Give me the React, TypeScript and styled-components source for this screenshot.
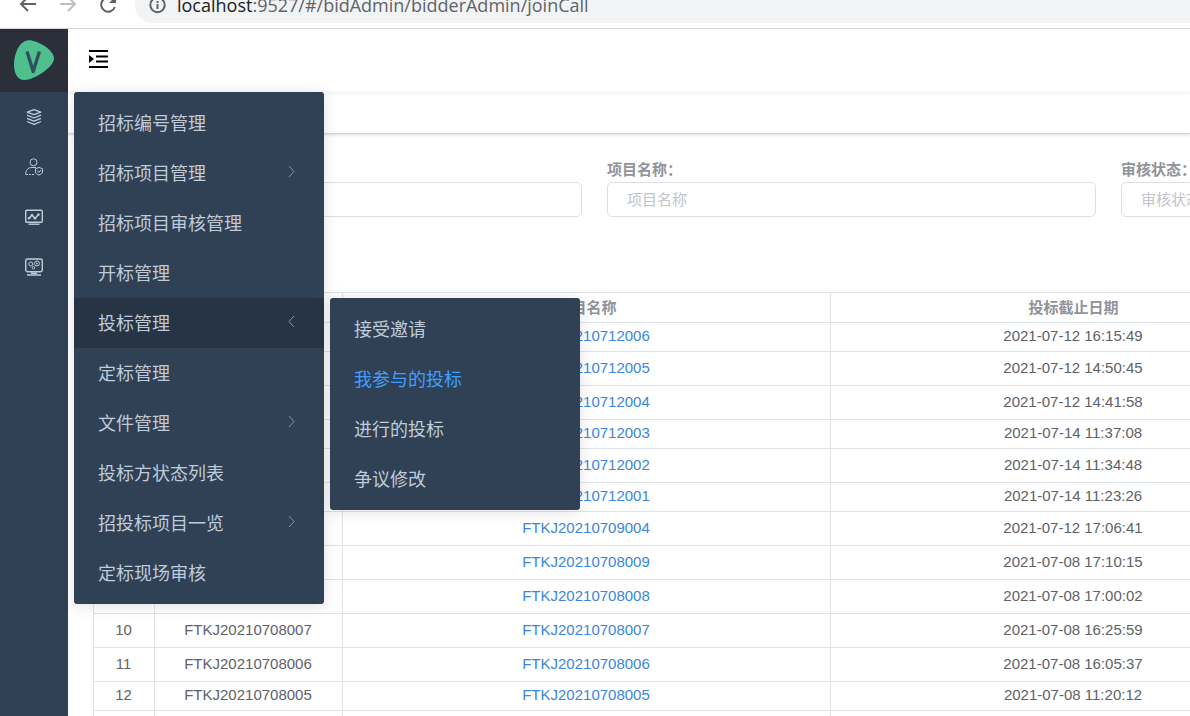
import React from "react";
import styled, { createGlobalStyle, css } from "styled-components";

const GlobalStyle = createGlobalStyle`
  *, *::before, *::after { box-sizing: border-box; }
  body {
    margin: 0;
    background: #fff;
    color: #606266;
    font-family: "Liberation Sans", "Noto Sans CJK SC", sans-serif;
    font-size: 15px;
  }
`;

const Page = styled.div`
  display: flex;
  flex-direction: column;
  height: 100vh;
  overflow: hidden;
`;

/* Browser chrome */
const BrowserBar = styled.div`
  flex: none;
  display: flex;
  align-items: flex-end;
  height: 29px;
  padding-bottom: 5px;
  border-bottom: 1px solid #d5d7da;
  overflow: hidden;
`;

const BrowserTools = styled.div`
  flex: 1;
  display: flex;
  align-items: center;
  height: 36px;
`;

const BrowserButton = styled.button`
  flex: none;
  display: flex;
  justify-content: center;
  width: 40px;
  padding: 0;
  border: 0;
  background: none;
`;

const NavButtons = styled.div`
  flex: none;
  display: flex;
  width: 135px;
  padding-left: 8px;
`;

const AddressBar = styled.div`
  flex: 1;
  display: flex;
  align-items: center;
  gap: 10px;
  height: 36px;
  padding-left: 13px;
  border-radius: 18px 0 0 18px;
  background: #f1f3f4;
  color: #5f6368;
  font-family: "Open Sans", sans-serif;
  font-size: 18px;
  line-height: 24px;
  white-space: nowrap;
`;

const Host = styled.span`
  color: #202124;
`;

/* Application shell */
const Shell = styled.div`
  flex: 1;
  display: flex;
  min-height: 0;
`;

const Sidebar = styled.aside`
  position: relative;
  z-index: 2;
  flex: none;
  width: 68px;
  background: #304156;
`;

const LogoLink = styled.a`
  display: flex;
  align-items: center;
  justify-content: center;
  height: 63px;
  padding-bottom: 2px;
  background: #2b2f3a;
`;

const MenuList = styled.ul`
  margin: 0;
  padding: 0;
  list-style: none;
`;

const SidebarItem = styled.li`
  position: relative;
`;

const SidebarButton = styled.button`
  display: flex;
  align-items: center;
  justify-content: center;
  width: 100%;
  height: 50px;
  padding: 0;
  border: 0;
  background: none;
  color: #bfcbd9;
`;

const Flyout = styled.ul`
  position: absolute;
  top: 0;
  left: calc(100% + 6px);
  z-index: 1;
  width: 250px;
  margin: 0;
  padding: 6px 0;
  border-radius: 3px;
  background: #304156;
  box-shadow: 0 2px 15px rgba(0, 0, 0, 0.12);
  list-style: none;
`;

const FlyoutItem = styled.li`
  position: relative;
`;

const FlyoutLink = styled.a<{ $open?: boolean; $active?: boolean }>`
  display: flex;
  align-items: center;
  justify-content: space-between;
  height: 50px;
  padding: 0 28px 2px 24px;
  background: ${(p) => (p.$open ? "#263445" : "transparent")};
  color: ${(p) => (p.$active ? "#409eff" : "#bfcbd9")};
  font-size: 18px;
  text-decoration: none;
  white-space: nowrap;
`;

const Main = styled.main`
  flex: 1;
  min-width: 0;
  overflow: hidden;
`;

const Navbar = styled.header`
  position: relative;
  display: flex;
  align-items: center;
  height: 63px;
  padding: 0 20px 4px;
  box-shadow: 0 1px 4px rgba(0, 21, 41, 0.08);
`;

const FoldButton = styled.button`
  display: flex;
  padding: 0;
  border: 0;
  background: none;
`;

const TagsBar = styled.div`
  height: 42px;
  border-bottom: 1px solid #d2d7de;
  box-shadow: 0 1px 3px rgba(0, 0, 0, 0.14);
`;

const Content = styled.div`
  display: flex;
  flex-direction: column;
  gap: 75px;
  padding: 23px 25px;
`;

const SearchForm = styled.form`
  display: grid;
  grid-template-columns: repeat(3, minmax(489px, 1fr));
  gap: 25px;
`;

const Field = styled.div`
  display: flex;
  flex-direction: column;
`;

const FieldLabel = styled.label`
  height: 25px;
  color: #909399;
  font-weight: 700;
  line-height: 25px;
`;

const control = css`
  width: 100%;
  height: 35px;
  padding: 0 19px;
  border: 1px solid #dcdfe6;
  border-radius: 5px;
  background: #fff;
  font-family: inherit;
  font-size: 15px;
`;

const TextInput = styled.input`
  ${control}
  color: #606266;
  &::placeholder { color: #c0c4cc; }
`;

const SelectInput = styled.select`
  ${control}
  appearance: none;
  color: #c0c4cc;
`;

const DataTable = styled.table`
  width: 100%;
  min-width: 1466px;
  border-top: 1px solid #dfe4e9;
  border-left: 1px solid #dfe4e9;
  border-spacing: 0;
  table-layout: fixed;
`;

const HeadCell = styled.th<{ $width?: number }>`
  width: ${(p) => (p.$width ? `${p.$width}px` : "auto")};
  height: 30px;
  padding: 0;
  border-right: 1px solid #dfe4e9;
  border-bottom: 1px solid #dfe4e9;
  color: #909399;
  line-height: 20px;
`;

const Cell = styled.td`
  padding: 0 1px 2px 0;
  border-right: 1px solid #dfe4e9;
  border-bottom: 1px solid #dfe4e9;
  line-height: 20px;
  text-align: center;
`;

const Row = styled.tr<{ $compact?: boolean }>`
  height: ${(p) => (p.$compact ? 29 : 34)}px;
`;

const ProjectLink = styled.a`
  color: #3a86dd;
  text-decoration: none;
`;

const BackIcon = () => (
  <svg width="18" height="16" viewBox="0 0 18 16" fill="none" stroke="#5f6368" strokeWidth="2">
    <path d="M17 8H2M9 1L2 8l7 7" />
  </svg>
);

const ForwardIcon = () => (
  <svg width="18" height="16" viewBox="0 0 18 16" fill="none" stroke="#bdc0c3" strokeWidth="2">
    <path d="M1 8h15M9 1l7 7-7 7" />
  </svg>
);

const ReloadIcon = () => (
  <svg width="18" height="18" viewBox="0 0 18 18" fill="none" stroke="#5f6368" strokeWidth="2">
    <path d="M14.500 4.200A7 7 0 1 0 15.800 11" />
    <path d="M17 0v7h-7z" fill="#5f6368" stroke="none" />
  </svg>
);

const InfoIcon = () => (
  <svg width="19" height="18" viewBox="0 0 19 18" fill="none" stroke="#5f6368" strokeWidth="2">
    <circle cx="9.500" cy="9" r="7.200" />
    <path d="M9.500 8v5M9.500 5v2" />
  </svg>
);

const Logo = () => (
  <svg width="40" height="40" viewBox="0 0 40 40">
    <path
      d="M14 0.300C21-.8 40 9 40 18.500 40 27 20 40 10.500 40 2.500 40 0 32 0 24.500 0 15 4.500 1.800 14 .3z"
      fill="#4fc08d"
    />
    <path d="M13 11.500l6.200 20 6.200-20" fill="none" stroke="#2f5061" strokeWidth="3.400" strokeLinejoin="round" />
  </svg>
);

const FoldIcon = () => (
  <svg width="21" height="18" viewBox="0 0 21 18">
    <path d="M1 1h19M8 6.500h12M8 11.500h12M1 17h19" stroke="#000" strokeWidth="2" />
    <path d="M1 5l5 4-5 4z" />
  </svg>
);

const LayersIcon = () => (
  <svg
    width="16"
    height="16"
    viewBox="0 0 16 16"
    fill="none"
    stroke="currentColor"
    strokeWidth="1.300"
    strokeLinejoin="round"
  >
    <path d="M8 .7l6.800 2.500L8 5.700 1.200 3.200z" />
    <path d="M1 6.200l7 2.800 7-2.800M1 9.400l7 2.800 7-2.800M1 12.500l7 2.800 7-2.800" />
  </svg>
);

const UserCheckIcon = () => (
  <svg width="18" height="18" viewBox="0 0 18 18" fill="none" stroke="currentColor">
    <circle cx="8.500" cy="4.300" r="3.500" />
    <path d="M11 9.500H7C3 9.500 .7 12 .7 16.500" />
    <path d="M1 16.500h9" strokeDasharray="2 1" />
    <path d="M14 9.500l3.500 1.200V14c0 1.500-2 2.700-3.500 3-1.500-.3-3.500-1.500-3.500-3v-3.300zM12.300 12.500l1.600 2 2-2.500" />
  </svg>
);

const ChartScreenIcon = () => (
  <svg width="18" height="16" viewBox="0 0 18 16" fill="none" stroke="currentColor">
    <rect x=".7" y="1.200" width="16.600" height="12" rx="1" strokeWidth="1.400" />
    <path d="M4 9.500L7 6l3 3.500 3.500-4" strokeWidth="1.600" />
    <g fill="currentColor" stroke="none">
      <circle cx="4" cy="9.300" r="1.200" />
      <circle cx="7" cy="6" r="1.200" />
      <circle cx="10" cy="9.300" r="1.200" />
      <circle cx="13.500" cy="5.500" r="1.200" />
    </g>
    <path d="M3.500 15.200h11" strokeWidth="1.400" />
  </svg>
);

const GearScreenIcon = () => (
  <svg width="18" height="18" viewBox="0 0 18 18" fill="none" stroke="currentColor">
    <rect x=".7" y="1" width="16.600" height="12.800" rx="2" strokeWidth="1.400" />
    <circle cx="5.800" cy="6" r="2" />
    <circle cx="12" cy="5.500" r="2.500" />
    <circle cx="12" cy="5.500" r=".6" />
    <circle cx="8.500" cy="9.700" r="1.300" />
    <path d="M2 17h14M6 15.300h6" strokeWidth="1.400" />
  </svg>
);

const Chevron = ({ left }: { left?: boolean }) => (
  <svg width="9" height="14" viewBox="0 0 9 14" fill="none" stroke="#909399">
    <path d={left ? "M7 1L2 6.500 7 12" : "M2 1l5 5.500L2 12"} />
  </svg>
);

type MenuEntry = { label: string; nested?: boolean; active?: boolean; children?: MenuEntry[] };

const menu: MenuEntry[] = [
  { label: "招标编号管理" },
  { label: "招标项目管理", nested: true },
  { label: "招标项目审核管理" },
  { label: "开标管理" },
  {
    label: "投标管理",
    nested: true,
    children: [
      { label: "接受邀请" },
      { label: "我参与的投标", active: true },
      { label: "进行的投标" },
      { label: "争议修改" },
    ],
  },
  { label: "定标管理" },
  { label: "文件管理", nested: true },
  { label: "投标方状态列表" },
  { label: "招投标项目一览", nested: true },
  { label: "定标现场审核" },
];

const bids = [
  { code: "FTKJ20210712006", deadline: "2021-07-12 16:15:49", compact: true },
  { code: "FTKJ20210712005", deadline: "2021-07-12 14:50:45" },
  { code: "FTKJ20210712004", deadline: "2021-07-12 14:41:58" },
  { code: "FTKJ20210712003", deadline: "2021-07-14 11:37:08", compact: true },
  { code: "FTKJ20210712002", deadline: "2021-07-14 11:34:48" },
  { code: "FTKJ20210712001", deadline: "2021-07-14 11:23:26", compact: true },
  { code: "FTKJ20210709004", deadline: "2021-07-12 17:06:41" },
  { code: "FTKJ20210708009", deadline: "2021-07-08 17:10:15" },
  { code: "FTKJ20210708008", deadline: "2021-07-08 17:00:02" },
  { code: "FTKJ20210708007", deadline: "2021-07-08 16:25:59" },
  { code: "FTKJ20210708006", deadline: "2021-07-08 16:05:37" },
  { code: "FTKJ20210708005", deadline: "2021-07-08 11:20:12", compact: true },
  { code: "FTKJ20210708004", deadline: "2021-07-08 11:02:40" },
];

const FlyoutMenu = ({ entries }: { entries: MenuEntry[] }) => (
  <Flyout>
    {entries.map((entry) => (
      <FlyoutItem key={entry.label}>
        <FlyoutLink href="#" $open={!!entry.children} $active={entry.active}>
          {entry.label}
          {entry.nested && <Chevron left={!!entry.children} />}
        </FlyoutLink>
        {entry.children && <FlyoutMenu entries={entry.children} />}
      </FlyoutItem>
    ))}
  </Flyout>
);

export default function App() {
  return (
    <Page>
      <GlobalStyle />
      <BrowserBar>
        <BrowserTools>
          <NavButtons>
            <BrowserButton aria-label="后退"><BackIcon /></BrowserButton>
            <BrowserButton aria-label="前进"><ForwardIcon /></BrowserButton>
            <BrowserButton aria-label="刷新"><ReloadIcon /></BrowserButton>
          </NavButtons>
          <AddressBar>
            <InfoIcon />
            <span><Host>localhost</Host>:9527/#/bidAdmin/bidderAdmin/joinCall</span>
          </AddressBar>
        </BrowserTools>
      </BrowserBar>
      <Shell>
        <Sidebar>
          <LogoLink href="#" aria-label="首页"><Logo /></LogoLink>
          <MenuList>
            <SidebarItem>
              <SidebarButton aria-label="招投标"><LayersIcon /></SidebarButton>
              <FlyoutMenu entries={menu} />
            </SidebarItem>
            <SidebarItem>
              <SidebarButton aria-label="用户"><UserCheckIcon /></SidebarButton>
            </SidebarItem>
            <SidebarItem>
              <SidebarButton aria-label="统计"><ChartScreenIcon /></SidebarButton>
            </SidebarItem>
            <SidebarItem>
              <SidebarButton aria-label="系统"><GearScreenIcon /></SidebarButton>
            </SidebarItem>
          </MenuList>
        </Sidebar>
        <Main>
          <Navbar>
            <FoldButton aria-label="展开菜单"><FoldIcon /></FoldButton>
          </Navbar>
          <TagsBar />
          <Content>
            <SearchForm>
              <Field>
                <FieldLabel htmlFor="code">项目编号：</FieldLabel>
                <TextInput id="code" placeholder="项目编号" />
              </Field>
              <Field>
                <FieldLabel htmlFor="name">项目名称：</FieldLabel>
                <TextInput id="name" placeholder="项目名称" />
              </Field>
              <Field>
                <FieldLabel htmlFor="status">审核状态：</FieldLabel>
                <SelectInput id="status"><option>审核状态</option></SelectInput>
              </Field>
            </SearchForm>
            <DataTable>
              <thead>
                <tr>
                  <HeadCell $width={61}>序号</HeadCell>
                  <HeadCell $width={188}>项目编号</HeadCell>
                  <HeadCell $width={488}>项目名称</HeadCell>
                  <HeadCell $width={486}>投标截止日期</HeadCell>
                  <HeadCell>操作</HeadCell>
                </tr>
              </thead>
              <tbody>
                {bids.map((bid, index) => (
                  <Row key={bid.code} $compact={bid.compact}>
                    <Cell>{index + 1}</Cell>
                    <Cell>{bid.code}</Cell>
                    <Cell><ProjectLink href="#">{bid.code}</ProjectLink></Cell>
                    <Cell>{bid.deadline}</Cell>
                    <Cell />
                  </Row>
                ))}
              </tbody>
            </DataTable>
          </Content>
        </Main>
      </Shell>
    </Page>
  );
}
